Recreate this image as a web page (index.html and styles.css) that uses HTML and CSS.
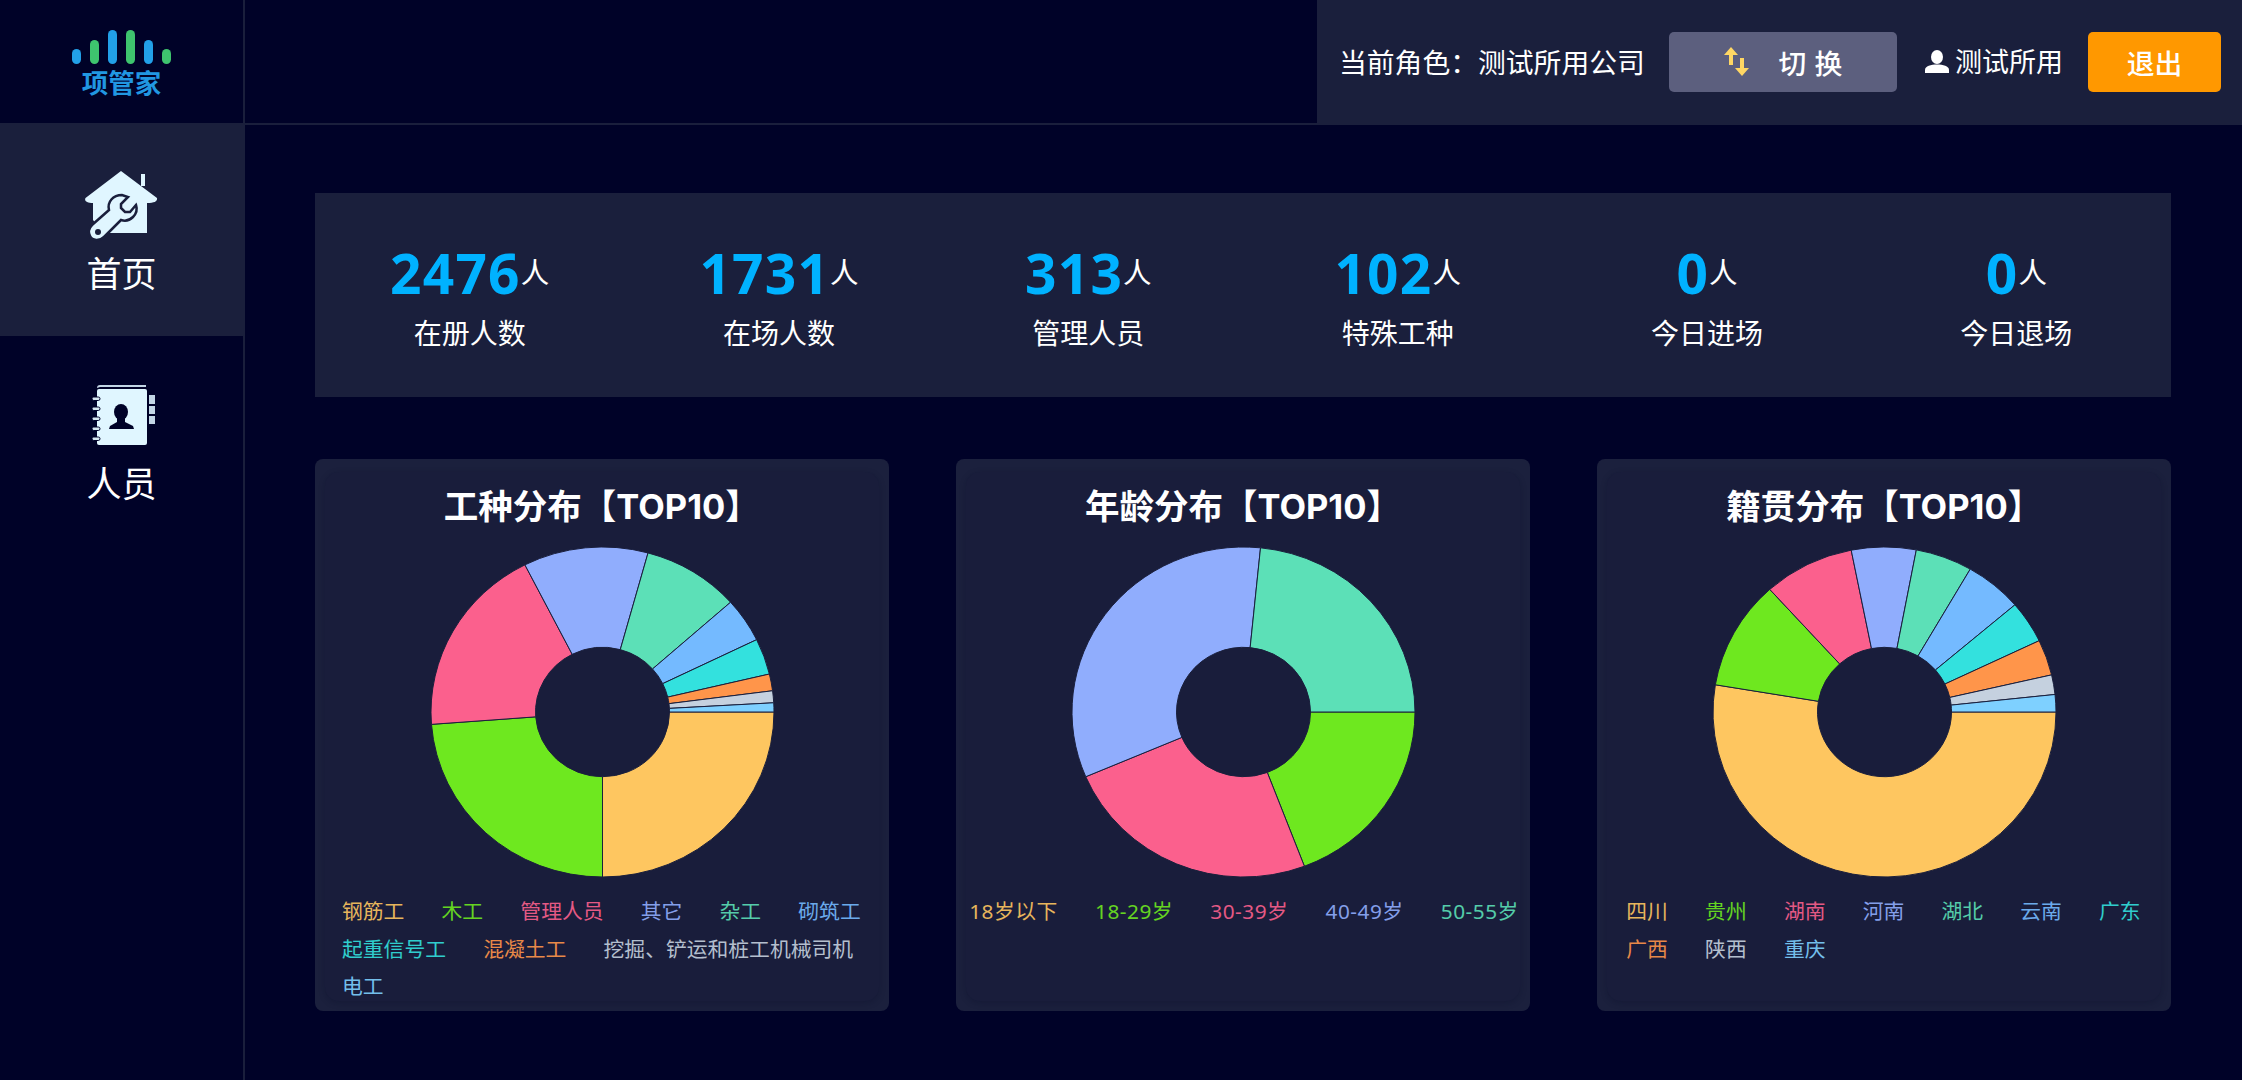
FILE: index.html
```html
<!DOCTYPE html>
<html lang="zh-CN">
<head>
<meta charset="utf-8">
<title>项管家</title>
<link rel="stylesheet" href="styles.css">
</head>
<body>
<div class="app">
  <header class="topbar">
    <div class="logo">
      <div class="logo-bars">
        <i class="bar bar-s blue"></i><i class="bar bar-m green"></i><i class="bar bar-l blue"></i><i class="bar bar-l green"></i><i class="bar bar-m blue"></i><i class="bar bar-s green"></i>
      </div>
      <div class="logo-text">项管家</div>
    </div>
    <div class="account">
      <span class="role">当前角色：测试所用公司</span>
      <button class="btn btn-switch">
        <svg class="switch-icon" viewBox="0 0 25 29" width="25" height="29"><path d="M7 0 14 8H9V18H5V8H0Z"/><path d="M18 29 25 21H20V11H16V21H11Z"/></svg>
        <span class="switch-text">切 换</span>
      </button>
      <span class="user">
        <svg class="user-icon" viewBox="0 0 24 23" width="24" height="23"><ellipse cx="12" cy="7" rx="6" ry="7"/><path d="M0 23V20C0 16 6 14.500 12 14.500S24 16 24 20V23Z"/></svg>
        <span class="user-name">测试所用</span>
      </span>
      <button class="btn btn-exit">退出</button>
    </div>
  </header>

  <nav class="sidebar">
    <a class="menu-item active">
      <svg class="menu-icon" viewBox="15 10 73 72" width="73" height="72">
        <path class="light" d="M51 11 87 38C87.500 41 85 43 77 43V73H34L23 60V43C17 43 14 41 15.500 38Z"/>
        <rect class="light" x="71" y="14" width="4" height="12"/>
        <path class="wrench" d="M22 65 39 50C37 42 43 35 52 35L58 37 51 44V48L55 52H60L66 45C69 54 60 63 51 60L34 77C30 81 22 81 20 76 18 72 19 68 22 65Z"/>
        <circle class="hole" cx="28" cy="72" r="3"/>
      </svg>
      <span>首页</span>
    </a>
    <a class="menu-item">
      <svg class="menu-icon book" viewBox="21 14 65 62" width="65" height="62">
        <path class="tab" d="M27 18C27 16 28 15 30 15H76V17H30Z"/>
        <rect class="light" x="27" y="19" width="50" height="56" rx="2"/>
        <g class="rings"><rect x="22" y="27" width="8" height="3.500" rx="1.700"/><rect x="22" y="37" width="8" height="3.500" rx="1.700"/><rect x="22" y="47" width="8" height="3.500" rx="1.700"/><rect x="22" y="57" width="8" height="3.500" rx="1.700"/><rect x="22" y="67" width="8" height="3.500" rx="1.700"/></g>
        <rect class="tab" x="79" y="25" width="6" height="9"/><rect class="tab" x="79" y="36" width="6" height="8"/><rect class="tab" x="79" y="46" width="6" height="8"/>
        <ellipse class="person" cx="51" cy="42" rx="7" ry="8"/>
        <path class="person" d="M47 48H55V52L63 56 64 59H39L40 56 47 52Z"/>
      </svg>
      <span>人员</span>
    </a>
  </nav>

  <main class="main">
    <section class="stats">
      <div class="stat"><div class="stat-value"><b>2476</b><span>人</span></div><div class="stat-label">在册人数</div></div>
      <div class="stat"><div class="stat-value"><b>1731</b><span>人</span></div><div class="stat-label">在场人数</div></div>
      <div class="stat"><div class="stat-value"><b>313</b><span>人</span></div><div class="stat-label">管理人员</div></div>
      <div class="stat"><div class="stat-value"><b>102</b><span>人</span></div><div class="stat-label">特殊工种</div></div>
      <div class="stat"><div class="stat-value"><b>0</b><span>人</span></div><div class="stat-label">今日进场</div></div>
      <div class="stat"><div class="stat-value"><b>0</b><span>人</span></div><div class="stat-label">今日退场</div></div>
    </section>

    <section class="charts">
      <article class="card">
        <div class="card-inner">
          <h2 class="card-title">工种分布【TOP10】</h2>
          <svg class="pie" width="343" height="330" viewBox="-171.500 -165 343 330" data-first="1" data-stops="90,175.700,243.100,285.400,318.300,334,346.700,352.600,356.800,360"></svg>
          <div class="legend">
            <span class="c1">钢筋工</span><span class="c2">木工</span><span class="c3">管理人员</span><span class="c4">其它</span><span class="c5">杂工</span><span class="c6">砌筑工</span><span class="c7">起重信号工</span><span class="c8">混凝土工</span><span class="c9">挖掘、铲运和桩工机械司机</span><span class="c10">电工</span>
          </div>
        </div>
      </article>
      <article class="card">
        <div class="card-inner">
          <h2 class="card-title">年龄分布【TOP10】</h2>
          <svg class="pie" width="343" height="330" viewBox="-171.500 -165 343 330" data-first="2" data-stops="69.200,156.900,275.700,360"></svg>
          <div class="legend legend-wide">
            <span class="c1">18岁以下</span><span class="c2">18-29岁</span><span class="c3">30-39岁</span><span class="c4">40-49岁</span><span class="c5">50-55岁</span>
          </div>
        </div>
      </article>
      <article class="card">
        <div class="card-inner">
          <h2 class="card-title">籍贯分布【TOP10】</h2>
          <svg class="pie" width="343" height="330" viewBox="-171.500 -165 343 330" data-first="1" data-stops="189.500,228,258.800,280.700,300,319.500,334.400,347,353.900,360"></svg>
          <div class="legend legend-place">
            <span class="c1">四川</span><span class="c2">贵州</span><span class="c3">湖南</span><span class="c4">河南</span><span class="c5">湖北</span><span class="c6">云南</span><span class="c7">广东</span><span class="c8">广西</span><span class="c9">陕西</span><span class="c10">重庆</span>
          </div>
        </div>
      </article>
    </section>
  </main>
</div>
<script src="app.js"></script>
</body>
</html>
```
FILE: styles.css
```css
* { box-sizing: border-box; }
html, body { margin: 0; height: 100%; }
body {
  background: #000228;
  color: #fff;
  font-family: "Noto Sans CJK SC", "Noto Sans", sans-serif;
  overflow: hidden;
}
.app {
  display: grid;
  grid-template-columns: 245px 1fr;
  grid-template-rows: 125px 1fr;
  width: 2242px;
  height: 1080px;
}

/* top bar */
.topbar {
  grid-column: 1 / -1;
  display: flex;
  justify-content: space-between;
  border-bottom: 2px solid #1a1f3c;
}
.logo {
  width: 245px;
  border-right: 2px solid #1a1f3c;
  display: flex;
  flex-direction: column;
  align-items: center;
  padding-top: 30px;
}
.logo-bars { display: flex; align-items: flex-end; gap: 9px; height: 34px; }
.bar { display: block; width: 9px; border-radius: 5px; }
.bar-s { height: 15px; }
.bar-m { height: 24px; }
.bar-l { height: 34px; }
.blue { background: #22a0e8; }
.green { background: #3ec46e; }
.logo-text {
  font-size: 26.500px;
  font-weight: 700;
  line-height: 30px;
  margin-top: 3px;
  color: #2197e2;
}
.account {
  display: flex;
  align-items: center;
  width: 925px;
  padding-left: 22px;
  background: #1a1f3c;
  font-size: 27.800px;
}
.role { width: 306px; white-space: nowrap; margin-top: -2px; }
.btn {
  border: 0;
  border-radius: 5px;
  color: #fff;
  font: inherit;
  height: 60px;
  padding: 0;
  display: flex;
  align-items: center;
  justify-content: center;
}
.btn-switch {
  width: 228px;
  margin-left: 24px;
  gap: 30px;
  background: #5c5f7e;
  font-weight: 500;
}
.switch-icon { fill: #ffd764; }
.switch-text { word-spacing: 2px; }
.user { display: flex; align-items: center; gap: 6px; margin-left: 28px; width: 137px; white-space: nowrap; }
.user-icon { fill: #fff; flex: none; }
.user-name { font-size: 27px; margin-top: -2px; }
.btn-exit { width: 133px; margin-left: 26px; background: #ff9800; font-weight: 500; }

/* sidebar */
.sidebar { border-right: 2px solid #1a1f3c; }
.menu-item {
  display: flex;
  flex-direction: column;
  align-items: center;
  height: 211px;
  padding-top: 45px;
  font-size: 35px;
  line-height: 46px;
}
.menu-item span { margin-top: 7px; }
.menu-item.active { background: #1a1f3c; }
.menu-item .book { margin-top: 3px; margin-left: 3px; }
.menu-item .book + span { margin-top: 13px; }
.light { fill: #e0f6ff; }
.wrench { fill: #e0f6ff; stroke: #1a1f3c; stroke-width: 2.500; }
.hole { fill: #1a1f3c; }
.tab { fill: #c3d6e6; }
.rings rect { fill: #d6e6f0; stroke: #000228; stroke-width: 1; }
.person { fill: #000228; }

/* main */
.main { padding: 68px 71px 0 70px; min-width: 0; }
.stats {
  display: grid;
  grid-template-columns: repeat(6, 1fr);
  height: 204px;
  padding-top: 53px;
  background: #1a1f3c;
}
.stat { display: flex; flex-direction: column; align-items: center; }
.stat-value { display: flex; align-items: center; height: 54px; }
.stat-value b {
  font-family: "Noto Sans", sans-serif;
  font-size: 55px;
  font-weight: 700;
  letter-spacing: 1.200px;
  line-height: 54px;
  color: #00b2ff;
}
.stat-value span { font-size: 28.500px; line-height: 34px; margin-top: -4px; }
.stat-label { font-size: 28px; line-height: 38px; margin-top: 13px; }

.charts {
  display: grid;
  grid-template-columns: repeat(3, 1fr);
  column-gap: 67.500px;
  margin-top: 62px;
}
.card {
  height: 552px;
  padding: 13px 10px 10px;
  background: #1b203d;
  border-radius: 8px;
}
.card-inner {
  height: 100%;
  background: #191d3b;
  border-radius: 14px;
  box-shadow: 0 2px 6px rgba(10, 13, 40, .3);
  padding-top: 12px;
}
.card-title {
  margin: 0;
  font-family: "Inter", "Noto Sans CJK SC", sans-serif;
  font-size: 34.500px;
  font-weight: 700;
  line-height: 46px;
  text-align: center;
}
.pie { display: block; margin: 17px 0 16px calc(50% - 171px); }
.pie path { stroke: #1a1f3c; stroke-width: 1; }
.legend {
  display: flex;
  flex-wrap: wrap;
  column-gap: 37.200px;
  padding: 0 10px 0 17px;
  font-family: "Noto Sans", "Noto Sans CJK SC", sans-serif;
  font-size: 20.800px;
  line-height: 37.500px;
}
.legend span { opacity: .9; white-space: nowrap; }
.legend-wide { padding: 0 0 0 3px; letter-spacing: .5px; }
.legend-place { padding: 0 10px 0 19px; }

.c1 { color: #fec660; fill: #fec660; }
.c2 { color: #6ee81f; fill: #6ee81f; }
.c3 { color: #fb608d; fill: #fb608d; }
.c4 { color: #90adfd; fill: #90adfd; }
.c5 { color: #5ce0b7; fill: #5ce0b7; }
.c6 { color: #74baff; fill: #74baff; }
.c7 { color: #33e1de; fill: #33e1de; }
.c8 { color: #ff954a; fill: #ff954a; }
.c9 { color: #c5d1df; fill: #c5d1df; }
.c10 { color: #7ed0ff; fill: #7ed0ff; }
```
FILE: app.js
```js
// Draws the doughnut slices from the boundary angles listed on each chart.
const SVG_NS = 'http://www.w3.org/2000/svg';
const OUTER = { x: 171.5, y: 165 };
const INNER = { x: 67, y: 64.7 };

function point(radius, degrees) {
  const t = degrees * Math.PI / 180;
  return (radius.x * Math.cos(t)).toFixed(2) + ' ' + (radius.y * Math.sin(t)).toFixed(2);
}

function slicePath(from, to) {
  const large = to - from > 180 ? 1 : 0;
  return 'M' + point(INNER, from) +
    'L' + point(OUTER, from) +
    'A' + OUTER.x + ' ' + OUTER.y + ' 0 ' + large + ' 1 ' + point(OUTER, to) +
    'L' + point(INNER, to) +
    'A' + INNER.x + ' ' + INNER.y + ' 0 ' + large + ' 0 ' + point(INNER, from) + 'Z';
}

document.querySelectorAll('.pie').forEach(function (svg) {
  const stops = svg.dataset.stops.split(',').map(Number);
  const first = Number(svg.dataset.first);
  let from = 0;
  stops.forEach(function (to, i) {
    const path = document.createElementNS(SVG_NS, 'path');
    path.setAttribute('d', slicePath(from, to));
    path.setAttribute('class', 'c' + (first + i));
    svg.appendChild(path);
    from = to;
  });
});
```
